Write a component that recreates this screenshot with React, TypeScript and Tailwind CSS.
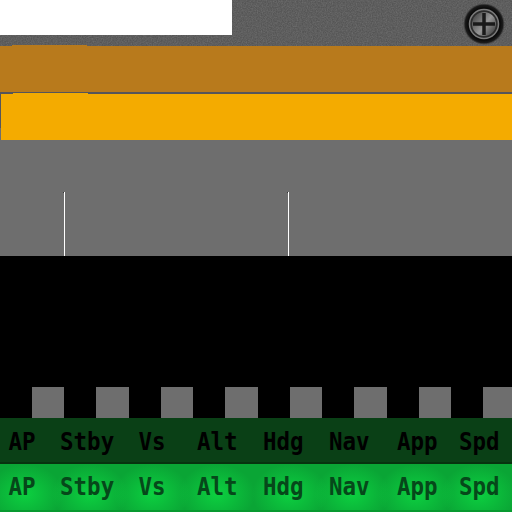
const labels = ["AP", "Stby", "Vs", "Alt", "Hdg", "Nav", "App", "Spd"];

function Screw() {
  return (
    <svg width="42" height="42" viewBox="0 0 42 42" className="absolute right-[7px] top-[3px]">
      <defs>
        <radialGradient id="halo">
          <stop offset="78%" stopColor="#0c0c0c" />
          <stop offset="90%" stopColor="#1c1c1c" />
          <stop offset="100%" stopColor="#444" stopOpacity="0" />
        </radialGradient>
        <linearGradient id="head" x1="0.1" y1="0.2" x2="0.9" y2="0.8">
          <stop offset="0%" stopColor="#505050" />
          <stop offset="55%" stopColor="#969696" />
          <stop offset="100%" stopColor="#505050" />
        </linearGradient>
      </defs>
      <circle cx="21" cy="21" r="21" fill="url(#halo)" />
      <circle cx="21" cy="21" r="14.5" fill="#2c2c2c" stroke="#7c7c7c" strokeWidth="1.5" />
      <circle cx="21" cy="21" r="12" fill="url(#head)" />
      <path d="M21 10V32M10 21H32" stroke="#1a1a1a" strokeWidth="3.5" />
    </svg>
  );
}

export default function App() {
  return (
    <div className="w-[512px] h-[512px] overflow-hidden flex flex-col bg-black font-['DejaVu_Sans_Mono',monospace]">
      <div className="relative h-[46px] bg-[#555555] shrink-0">
        <svg className="absolute inset-0" width="512" height="46">
          <filter id="grain">
            <feTurbulence type="fractalNoise" baseFrequency="0.8" numOctaves="2" />
            <feColorMatrix values="0 0 0 0 0.2 0 0 0 0 0.2 0 0 0 0 0.2 0 0 0 1.6 -0.4" />
          </filter>
          <rect width="512" height="46" filter="url(#grain)" opacity="0.6" />
        </svg>
        <div className="relative w-[232px] h-[35px] bg-white" />
        <Screw />
        <div className="absolute left-[12px] bottom-0 w-[75px] h-px bg-[#b87a1c]" />
      </div>

      <div className="h-[46px] bg-[#b87a1c] shrink-0" />

      <div className="relative h-[2px] bg-[#55555a] shrink-0">
        <div className="absolute left-[13px] bottom-0 w-[75px] h-px bg-[#f4ab00]" />
      </div>

      <div className="h-[46px] shrink-0 pl-px bg-[linear-gradient(#55555a_34px,#6e6e6e_34px)]">
        <div className="h-full bg-[#f4ab00]" />
      </div>

      <div className="relative h-[116px] bg-[#6e6e6e] shrink-0">
        <div className="absolute left-[64px] bottom-0 w-px h-[64px] bg-white" />
        <div className="absolute left-[63px] top-[52px] size-px bg-[#333333]" />
        <div className="absolute left-[288px] bottom-0 w-px h-[64px] bg-white" />
        <div className="absolute left-[287px] top-[52px] size-px bg-[#333333]" />
      </div>

      <div className="h-[162px] bg-black shrink-0 flex items-end">
        {labels.map((l) => (
          <div key={l} className="w-[64.45px] shrink-0 pl-[32px]">
            <div className="w-[32.4px] h-[31px] bg-[#6e6e6e]" />
          </div>
        ))}
      </div>

      <div className="h-[44px] bg-[#0a4016] shrink-0 grid grid-cols-[51.5px_78.5px_58.5px_66px_66px_68px_62px_1fr] items-center pl-[8.5px] text-[22.5px] font-bold text-black">
        {labels.map((l) => (
          <div key={l} className="leading-none scale-y-[1.1] origin-left translate-y-[1px]">{l}</div>
        ))}
      </div>

      <div className="h-[2px] bg-[#07330f] shrink-0" />

      <div className="h-[46px] shrink-0 grid grid-cols-[51.5px_78.5px_58.5px_66px_66px_68px_62px_1fr] items-center pl-[8.5px] text-[22.5px] font-bold text-[#06481a] bg-[#0aa535] bg-[radial-gradient(38px_30px_at_25px_30px,#0cd040,transparent),radial-gradient(38px_30px_at_90px_30px,#0cd040,transparent),radial-gradient(38px_30px_at_152px_30px,#0cd040,transparent),radial-gradient(38px_30px_at_217px_30px,#0cd040,transparent),radial-gradient(38px_30px_at_290px_30px,#0cd040,transparent),radial-gradient(38px_30px_at_352px_30px,#0cd040,transparent),radial-gradient(38px_30px_at_416px_30px,#0cd040,transparent),radial-gradient(38px_30px_at_479px_30px,#0cd040,transparent)]">
        {labels.map((l) => (
          <div key={l} className="leading-none scale-y-[1.1] origin-left -translate-y-[1px]">{l}</div>
        ))}
      </div>

      <div className="h-[2px] bg-[#089a30] shrink-0" />
    </div>
  );
}
